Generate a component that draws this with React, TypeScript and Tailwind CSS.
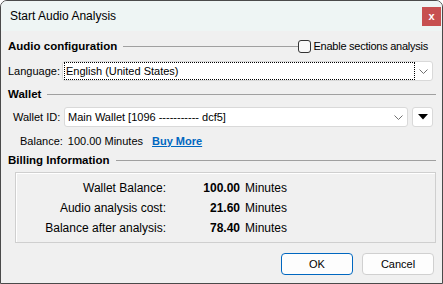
const SectionHeader = ({ title, right }: { title: string; right?: React.ReactNode }) => (
  <div className="flex h-[18px] items-center whitespace-nowrap pt-px">
    <span className="text-[11.5px] font-bold">{title}</span>
    <div className="ml-[6px] h-px flex-1 bg-[#a0a0a0]" />
    {right}
  </div>
)

const Chevron = () => (
  <svg width="9" height="5" viewBox="0 0 9 5" className="mx-[4px] shrink-0">
    <path d="M0.5 0.5 L4.5 4.5 L8.5 0.5" fill="none" stroke="#707070" strokeWidth="1" />
  </svg>
)

const Select = ({ value, focused, className }: { value: string; focused?: boolean; className?: string }) => (
  <div
    className={`flex h-[20px] shrink-0 items-center rounded-[3px] border border-[#d9d9d9] bg-white ${className ?? ""}`}
  >
    <div
      className={`ml-px flex h-[18px] flex-1 items-center ${
        focused ? "border border-dotted border-black pl-px" : "pl-[2px]"
      }`}
    >
      {value}
    </div>
    <Chevron />
  </div>
)

const BillingRow = ({ label, value }: { label: string; value: string }) => (
  <div className="flex h-[20px] items-center whitespace-nowrap text-[12px]">
    <span className="w-[150px] text-right">{label}</span>
    <span className="w-[74px] text-right font-bold">{value}</span>
    <span className="ml-[5px]">Minutes</span>
  </div>
)

export default function App() {
  return (
    <div className="font-['Liberation_Sans',Arial,sans-serif] text-[11px] leading-none text-black">
      <div className="flex h-[284px] w-[443px] flex-col overflow-hidden rounded-t-[7px] border border-[#4a4a4a] bg-[#f0f0f0]">
        {/* title bar */}
        <div className="flex h-[30px] shrink-0 items-center justify-between bg-[#eef5f4] pl-[9px] pr-px">
          <span className="text-[12px]">Start Audio Analysis</span>
          <div className="flex h-[19px] w-[19px] items-center justify-center bg-[#c75050] text-[11px] font-bold text-white">
            x
          </div>
        </div>

        <div className="flex flex-1 flex-col pl-[7px] pr-[6px]">
          <div className="mt-[6px]">
            <SectionHeader
              title="Audio configuration"
              right={
                <label className="mr-[8px] flex items-center">
                  <span className="h-[13px] w-[13px] rounded-[3px] border border-[#333] bg-[#f8f8f8]" />
                  <span className="ml-[3px] tracking-[-0.25px]">Enable sections analysis</span>
                </label>
              }
            />
          </div>

          <div className="mt-[6px] flex items-center whitespace-nowrap">
            <span className="w-[54px] shrink-0">Language:</span>
            <Select value="English (United States)" focused className="w-[371px]" />
          </div>

          <div className="mt-[4px]">
            <SectionHeader title="Wallet" />
          </div>

          <div className="mt-[4px] flex items-center whitespace-nowrap">
            <span className="w-[56px] shrink-0 pl-[5px]">Wallet ID:</span>
            <Select value="Main Wallet [1096 ----------- dcf5]" className="w-[344px]" />
            <button className="ml-[4px] flex h-[20px] w-[21px] items-center justify-center rounded-[3px] border border-[#d9d9d9] bg-white">
              <svg width="10" height="6" viewBox="0 0 10 6">
                <path d="M0 0 H10 L5 5.5 Z" fill="#000" />
              </svg>
            </button>
          </div>

          <div className="mt-[5px] flex h-[18px] items-center whitespace-nowrap pl-[12px]">
            <span>Balance:</span>
            <span className="ml-[5px]">100.00 Minutes</span>
            <span className="ml-[9px] font-bold text-[#0067c0] underline">Buy More</span>
          </div>

          <div className="mt-px">
            <SectionHeader title="Billing Information" />
          </div>

          <div className="ml-[7px] mt-[3px] flex h-[71px] flex-col justify-center border border-[#cfcfcf] shadow-[inset_1px_1px_0_#fff]">
            <BillingRow label="Wallet Balance:" value="100.00" />
            <BillingRow label="Audio analysis cost:" value="21.60" />
            <BillingRow label="Balance after analysis:" value="78.40" />
          </div>

          <div className="mt-[10px] flex justify-end gap-[9px] pr-[2px]">
            <button className="h-[22px] w-[72px] rounded-[4px] border border-[#0067c0] bg-[#fdfdfd]">
              OK
            </button>
            <button className="h-[22px] w-[72px] rounded-[4px] border border-[#d0d0d0] bg-[#fdfdfd]">
              Cancel
            </button>
          </div>
        </div>
      </div>
    </div>
  )
}
